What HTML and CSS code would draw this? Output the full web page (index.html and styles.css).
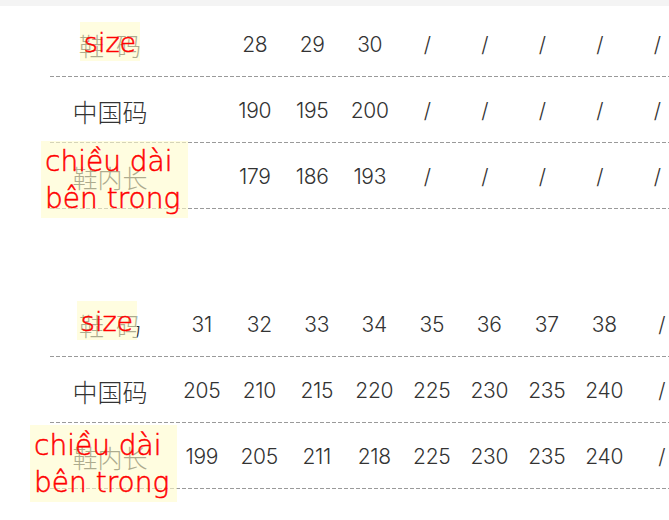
FILE: index.html
```
<!DOCTYPE html>
<html lang="zh">
<head>
<meta charset="utf-8">
<title>尺码表</title>
<link rel="stylesheet" href="styles.css">
</head>
<body>
<div class="band"></div>

<section class="table t1">
  <div class="row">
    <div class="label"><span class="wide">鞋码</span><span class="tag tag-size t1-size">size</span></div>
    <div class="cells"><span>28</span><span>29</span><span>30</span><span>/</span><span>/</span><span>/</span><span>/</span><span>/</span></div>
  </div>
  <div class="row">
    <div class="label">中国码</div>
    <div class="cells"><span>190</span><span>195</span><span>200</span><span>/</span><span>/</span><span>/</span><span>/</span><span>/</span></div>
  </div>
  <div class="row">
    <div class="label">鞋内长<span class="tag tag-len t1-len">chiều dài<br>bên trong</span></div>
    <div class="cells"><span>179</span><span>186</span><span>193</span><span>/</span><span>/</span><span>/</span><span>/</span><span>/</span></div>
  </div>
</section>

<section class="table t2">
  <div class="row">
    <div class="label"><span class="wide">鞋码</span><span class="tag tag-size t2-size">size</span></div>
    <div class="cells"><span>31</span><span>32</span><span>33</span><span>34</span><span>35</span><span>36</span><span>37</span><span>38</span><span>/</span></div>
  </div>
  <div class="row">
    <div class="label">中国码</div>
    <div class="cells"><span>205</span><span>210</span><span>215</span><span>220</span><span>225</span><span>230</span><span>235</span><span>240</span><span>/</span></div>
  </div>
  <div class="row">
    <div class="label">鞋内长<span class="tag tag-len t2-len">chiều dài<br>bên trong</span></div>
    <div class="cells"><span>199</span><span>205</span><span>211</span><span>218</span><span>225</span><span>230</span><span>235</span><span>240</span><span>/</span></div>
  </div>
</section>
</body>
</html>
```

FILE: styles.css
```
html, body {
  margin: 0;
  padding: 0;
  background: #ffffff;
  overflow: hidden;
}

body {
  width: 669px;
  height: 520px;
  font-family: Inter, "Noto Sans", sans-serif;
  color: #333333;
}

.band {
  height: 6px;
  background: #f4f4f4;
}

.table {
  margin-left: 50px;
}

.t1 {
  margin-top: 5px;
}

.t2 {
  margin-top: 82px;
}

.row {
  display: flex;
  align-items: center;
  height: 66px;
  box-sizing: border-box;
  padding-bottom: 1px;
  width: 619px;
  background-image: linear-gradient(to right, #9a9a9a 4px, transparent 4px);
  background-size: 6px 1px;
  background-repeat: repeat-x;
  background-position: left bottom;
}

.label {
  position: relative;
  flex: 0 0 120px;
  text-align: center;
  font-family: "Noto Sans CJK SC", sans-serif;
  font-weight: 300;
  font-size: 25px;
  line-height: 30px;
  padding-top: 2px;
  color: #333333;
}

.wide {
  letter-spacing: 12px;
  margin-right: -12px;
}

.cells {
  display: flex;
  flex-shrink: 0;
  padding-top: 2px;
}

.t1 .cells {
  margin-left: 56px;
}

.t2 .cells {
  margin-left: 3px;
}

.cells span {
  flex: 0 0 57.5px;
  text-align: center;
  font-size: 21px;
  font-weight: 300;
  line-height: 30px;
  letter-spacing: -0.3px;
}

.tag {
  position: absolute;
  z-index: 2;
  box-sizing: border-box;
  background: rgba(255, 252, 203, 0.6);
  color: #ff0000;
  font-family: "DejaVu Sans", sans-serif;
  font-size: 28px;
  letter-spacing: 0;
  text-align: left;
  -webkit-text-stroke: 0.5px #ff0000;
}

.tag-size {
  width: 60px;
  height: 39px;
  padding-top: 3px;
  line-height: 36px;
  text-align: center;
  font-size: 27px;
}

.tag-len {
  width: 147px;
  height: 77px;
  padding: 2px 0 0 4px;
  line-height: 37px;
  white-space: nowrap;
}

.t1-size {
  left: 30px;
  top: -6px;
}

.t2-size {
  left: 27px;
  top: -7px;
}

.t1-len {
  left: -9px;
  top: -19px;
}

.t2-len {
  left: -20px;
  top: -15px;
}
```
